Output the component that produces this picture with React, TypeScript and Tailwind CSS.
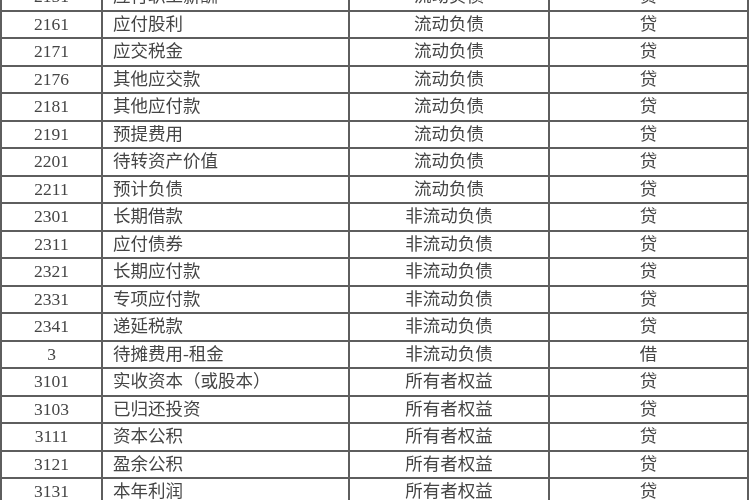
import React from "react";

const rows: [string, string, string, string][] = [
  ["2151", "应付职工薪酬", "流动负债", "贷"],
  ["2161", "应付股利", "流动负债", "贷"],
  ["2171", "应交税金", "流动负债", "贷"],
  ["2176", "其他应交款", "流动负债", "贷"],
  ["2181", "其他应付款", "流动负债", "贷"],
  ["2191", "预提费用", "流动负债", "贷"],
  ["2201", "待转资产价值", "流动负债", "贷"],
  ["2211", "预计负债", "流动负债", "贷"],
  ["2301", "长期借款", "非流动负债", "贷"],
  ["2311", "应付债券", "非流动负债", "贷"],
  ["2321", "长期应付款", "非流动负债", "贷"],
  ["2331", "专项应付款", "非流动负债", "贷"],
  ["2341", "递延税款", "非流动负债", "贷"],
  ["3", "待摊费用-租金", "非流动负债", "借"],
  ["3101", "实收资本（或股本）", "所有者权益", "贷"],
  ["3103", "已归还投资", "所有者权益", "贷"],
  ["3111", "资本公积", "所有者权益", "贷"],
  ["3121", "盈余公积", "所有者权益", "贷"],
  ["3131", "本年利润", "所有者权益", "贷"],
];

export default function App() {
  return (
    <div className="w-[750px] h-[500px] overflow-hidden bg-white">
      <div className="-mt-[18px] blur-[0.5px]">
        <table
          className="table-fixed border-collapse w-[747px] text-[17.5px] text-[#454545]"
          style={{ fontFamily: '"Liberation Serif", "Noto Sans CJK SC", serif' }}
        >
          <colgroup>
            <col className="w-[101px]" />
            <col className="w-[247px]" />
            <col className="w-[200px]" />
            <col className="w-[199px]" />
          </colgroup>
          <tbody>
            {rows.map((r, i) => (
              <tr key={i} className="h-[27.5px]">
                <td className="border-2 border-[#5e5e5e] text-center p-0 leading-none">{r[0]}</td>
                <td className="border-2 border-[#5e5e5e] text-left pl-[10px] p-0 leading-none whitespace-nowrap">{r[1]}</td>
                <td className="border-2 border-[#5e5e5e] text-center p-0 leading-none">{r[2]}</td>
                <td className="border-2 border-[#5e5e5e] text-center p-0 leading-none">{r[3]}</td>
              </tr>
            ))}
          </tbody>
        </table>
      </div>
    </div>
  );
}
